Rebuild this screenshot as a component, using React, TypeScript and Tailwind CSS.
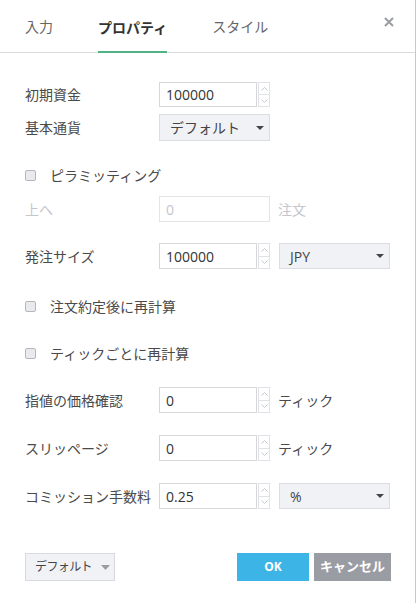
import React from "react";

const font = { fontFamily: '"Open Sans", "Noto Sans CJK JP", sans-serif' };

function Spinner() {
  return (
    <div className="ml-px flex h-full w-[12px] flex-col border border-[#e1e2e6]">
      <div className="flex flex-1 items-center justify-center border-b border-[#e1e2e6]">
        <svg width="7" height="4" viewBox="0 0 7 4"><path d="M0.5 3.5L3.5 0.5L6.5 3.5" fill="none" stroke="#b9bcc4" strokeWidth="0.8" /></svg>
      </div>
      <div className="flex flex-1 items-center justify-center">
        <svg width="7" height="4" viewBox="0 0 7 4"><path d="M0.5 0.5L3.5 3.5L6.5 0.5" fill="none" stroke="#b9bcc4" strokeWidth="0.8" /></svg>
      </div>
    </div>
  );
}

function NumInput({ value }: { value: string }) {
  return (
    <div className="flex h-full w-[111px]">
      <div className="flex h-full w-[98px] items-center border border-[#d6d7db] pl-[6px] text-[14px] text-[#333]">{value}</div>
      <Spinner />
    </div>
  );
}

function Caret({ color = "#444" }: { color?: string }) {
  return (
    <svg width="8" height="4" viewBox="0 0 8 4"><path d="M0 0H8L4 4Z" fill={color} /></svg>
  );
}

function Select({ value }: { value: string }) {
  return (
    <div className="flex h-full w-[111px] items-center justify-between border border-[#dcdde2] bg-[#f1f2f6] pl-[10px] pr-[5px] text-[14px] text-[#444]">
      <span>{value}</span>
      <Caret />
    </div>
  );
}

function Checkbox() {
  return <div className="h-[11px] w-[11px] rounded-[2px] border border-[#b5b7bd] bg-[#e9eaee]" />;
}

function Label({ children, disabled }: { children: React.ReactNode; disabled?: boolean }) {
  return (
    <div className={`w-[134px] whitespace-nowrap text-[14px] ${disabled ? "text-[#c4c6cc]" : "text-[#4a4a4a]"}`}>{children}</div>
  );
}

export default function App() {
  return (
    <div className="h-[603px] w-[416px] border-r border-[#c7c8cc] bg-white" style={font}>
      <div className="relative flex h-[53px] items-stretch border-b border-[#dadbdf] pl-[25px]">
        <div className="flex items-center pt-[1px] text-[14px] text-[#666]">入力</div>
        <div className="ml-[45px] -mb-px flex items-center border-b-2 border-[#4fb384] pt-[3px] text-[14px] font-bold text-[#333]">プロパティ</div>
        <div className="ml-[45px] flex items-center pt-[1px] text-[14px] text-[#666]">スタイル</div>
        <div className="absolute right-[21px] top-[17px]">
          <svg width="10" height="10" viewBox="0 0 10 10"><path d="M1 1L9 9M9 1L1 9" stroke="#9a9da4" strokeWidth="2" /></svg>
        </div>
      </div>

      <div className="px-[25px] pt-[29px]">
        <div className="flex h-[25px] items-center">
          <Label>初期資金</Label>
          <NumInput value="100000" />
        </div>
        <div className="mt-[7px] flex h-[27px] items-center">
          <Label>基本通貨</Label>
          <Select value="デフォルト" />
        </div>
        <div className="mt-[21px] flex h-[26px] items-center gap-[14px]">
          <Checkbox />
          <span className="text-[14px] text-[#4a4a4a]">ピラミッティング</span>
        </div>
        <div className="mt-[8px] flex h-[26px] items-center">
          <Label disabled>上へ</Label>
          <div className="flex h-full w-[111px] items-center border border-[#e3e4e8] pl-[6px] text-[14px] text-[#c4c6cc]">0</div>
          <span className="ml-[8px] text-[14px] text-[#c4c6cc]">注文</span>
        </div>
        <div className="mt-[21px] flex h-[26px] items-center">
          <Label>発注サイズ</Label>
          <NumInput value="100000" />
          <div className="ml-[9px] h-full">
            <Select value="JPY" />
          </div>
        </div>
        <div className="mt-[24px] flex h-[26px] items-center gap-[14px]">
          <Checkbox />
          <span className="text-[14px] text-[#4a4a4a]">注文約定後に再計算</span>
        </div>
        <div className="mt-[21px] flex h-[26px] items-center gap-[14px]">
          <Checkbox />
          <span className="text-[14px] text-[#4a4a4a]">ティックごとに再計算</span>
        </div>
        <div className="mt-[21px] flex h-[26px] items-center">
          <Label>指値の価格確認</Label>
          <NumInput value="0" />
          <span className="ml-[8px] text-[14px] text-[#4a4a4a]">ティック</span>
        </div>
        <div className="mt-[22px] flex h-[26px] items-center">
          <Label>スリッページ</Label>
          <NumInput value="0" />
          <span className="ml-[8px] text-[14px] text-[#4a4a4a]">ティック</span>
        </div>
        <div className="mt-[22px] flex h-[26px] items-center">
          <Label>コミッション手数料</Label>
          <NumInput value="0.25" />
          <div className="ml-[9px] h-full">
            <Select value="%" />
          </div>
        </div>

        <div className="mt-[44px] flex h-[28px] items-center">
          <div className="flex h-full w-[90px] items-center whitespace-nowrap border border-[#d9dadf] bg-[#f1f2f6] pl-[9px] text-[12px] tracking-[-0.6px] text-[#444]">
            <span>デフォルト</span>
            <svg width="9" height="5" viewBox="0 0 9 5" className="ml-[9px]"><path d="M0 0H9L4.5 5Z" fill="#9a9ca3" /></svg>
          </div>
          <div className="ml-auto flex h-full w-[72px] items-center justify-center bg-[#3cb4e5] text-[12px] font-bold text-white">OK</div>
          <div className="ml-[5px] mr-[-1px] flex h-full w-[77px] items-center justify-center whitespace-nowrap bg-[#9a9ca3] text-[13px] font-bold text-white">キャンセル</div>
        </div>
      </div>
    </div>
  );
}
